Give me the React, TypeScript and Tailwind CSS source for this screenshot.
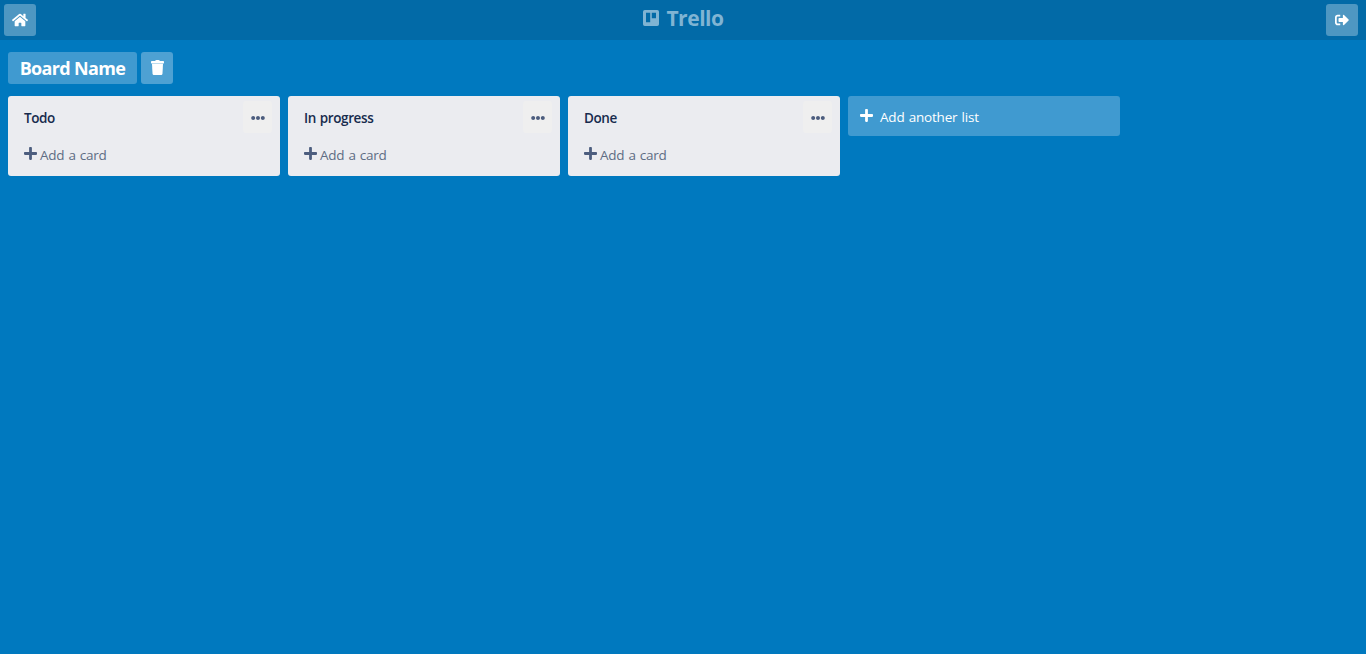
import { FaEllipsisH, FaHome, FaPlus, FaSignOutAlt } from 'react-icons/fa';

const lists = ['Todo', 'In progress', 'Done'];

function TrelloLogo() {
  return (
    <div className="flex h-6 items-center text-[#80b4d3]">
      <svg className="size-4" viewBox="0 0 16 16" fill="currentColor" aria-hidden="true">
        <path
          fillRule="evenodd"
          d="M1.8 0h12.4A1.8 1.8 0 0 1 16 1.8v12.4a1.8 1.8 0 0 1-1.8 1.8H1.8A1.8 1.8 0 0 1 0 14.2V1.8A1.8 1.8 0 0 1 1.8 0ZM3 2.8v9.4h4.2V2.8ZM8.8 2.8v5.4H13V2.8Z"
        />
      </svg>
      <span className="ml-[7px] text-[21px] leading-6 font-bold tracking-[-0.45px]">Trello</span>
    </div>
  );
}

function TrashIcon() {
  return (
    <svg className="mb-px h-[15px] w-[13px]" viewBox="0 0 13 15" fill="currentColor" aria-hidden="true">
      <path d="M4 1C4.4.3 5 0 5.6 0h1.8C8 0 8.6.3 9 1h3.2c.5 0 .8.3.8.8V3c0 .3-.2.5-.5.5H.5C.2 3.5 0 3.3 0 3V1.800C0 1.300.3 1 .8 1Z" />
      <path d="M1 3.800h11l-.5 9.600c-.1.900-.8 1.600-1.700 1.600H3.200c-.9 0-1.600-.7-1.700-1.600Z" />
    </svg>
  );
}

function List({ title }: { title: string }) {
  return (
    <section className="h-20 w-[272px] shrink-0 rounded-[3px] bg-[#ebecf0] px-2">
      <header className="flex items-start justify-between">
        <h2 className="pt-3 pl-2 text-[13.5px] leading-5 font-semibold tracking-[-0.4px] text-[#172b4d] [word-spacing:0.8px]">
          {title}
        </h2>
        <button className="mt-[5px] flex h-8 w-[29px] items-center justify-center rounded-[3px] bg-[#efefef] pt-px text-[#4c5d7e]">
          <FaEllipsisH size={14} />
        </button>
      </header>
      <button className="mt-3 ml-2 flex h-5 items-center text-[13.5px] leading-5 text-[#5e6c84]">
        <FaPlus className="mr-[3px] mb-[3px] h-[15px] w-[13px] text-[#4c5d7e]" />
        <span className="tracking-[-0.25px] [word-spacing:0.9px]">Add a card</span>
      </button>
    </section>
  );
}

export default function App() {
  return (
    <div className="flex h-screen flex-col overflow-hidden bg-[#0079bf] font-['Open_Sans','Noto_Sans',sans-serif]">
      <header className="flex h-10 shrink-0 items-center justify-between bg-[#026aa7] pr-2 pl-1">
        <button className="flex size-8 items-center justify-center rounded-[3px] bg-[#4e97c2] text-white">
          <FaHome size={16} />
        </button>
        <div className="-mt-1 ml-[5px]">
          <TrelloLogo />
        </div>
        <button className="flex size-8 items-center justify-center rounded-[3px] bg-[#4e97c2] text-white">
          <FaSignOutAlt size={14} />
        </button>
      </header>
      <div className="mt-3 ml-2 flex h-8 gap-1">
        <h1 className="flex w-[129px] items-center justify-center rounded-[3px] bg-[#409ad0] text-[18px] leading-8 font-bold tracking-[-0.65px] whitespace-nowrap text-white">
          Board Name
        </h1>
        <button className="flex w-8 items-center justify-center rounded-[3px] bg-[#4ea1d3] text-white">
          <TrashIcon />
        </button>
      </div>
      <main className="mt-3 ml-2 flex items-start gap-2">
        {lists.map((title) => (
          <List key={title} title={title} />
        ))}
        <button className="flex h-10 w-[272px] shrink-0 items-center rounded-[3px] bg-[#409ad0] pl-3 text-[13.5px] text-white">
          <FaPlus className="mr-[7px] mb-px h-[15px] w-[13px]" />
          <span className="pt-0.5 tracking-[-0.2px] [word-spacing:0.9px]">Add another list</span>
        </button>
      </main>
    </div>
  );
}
